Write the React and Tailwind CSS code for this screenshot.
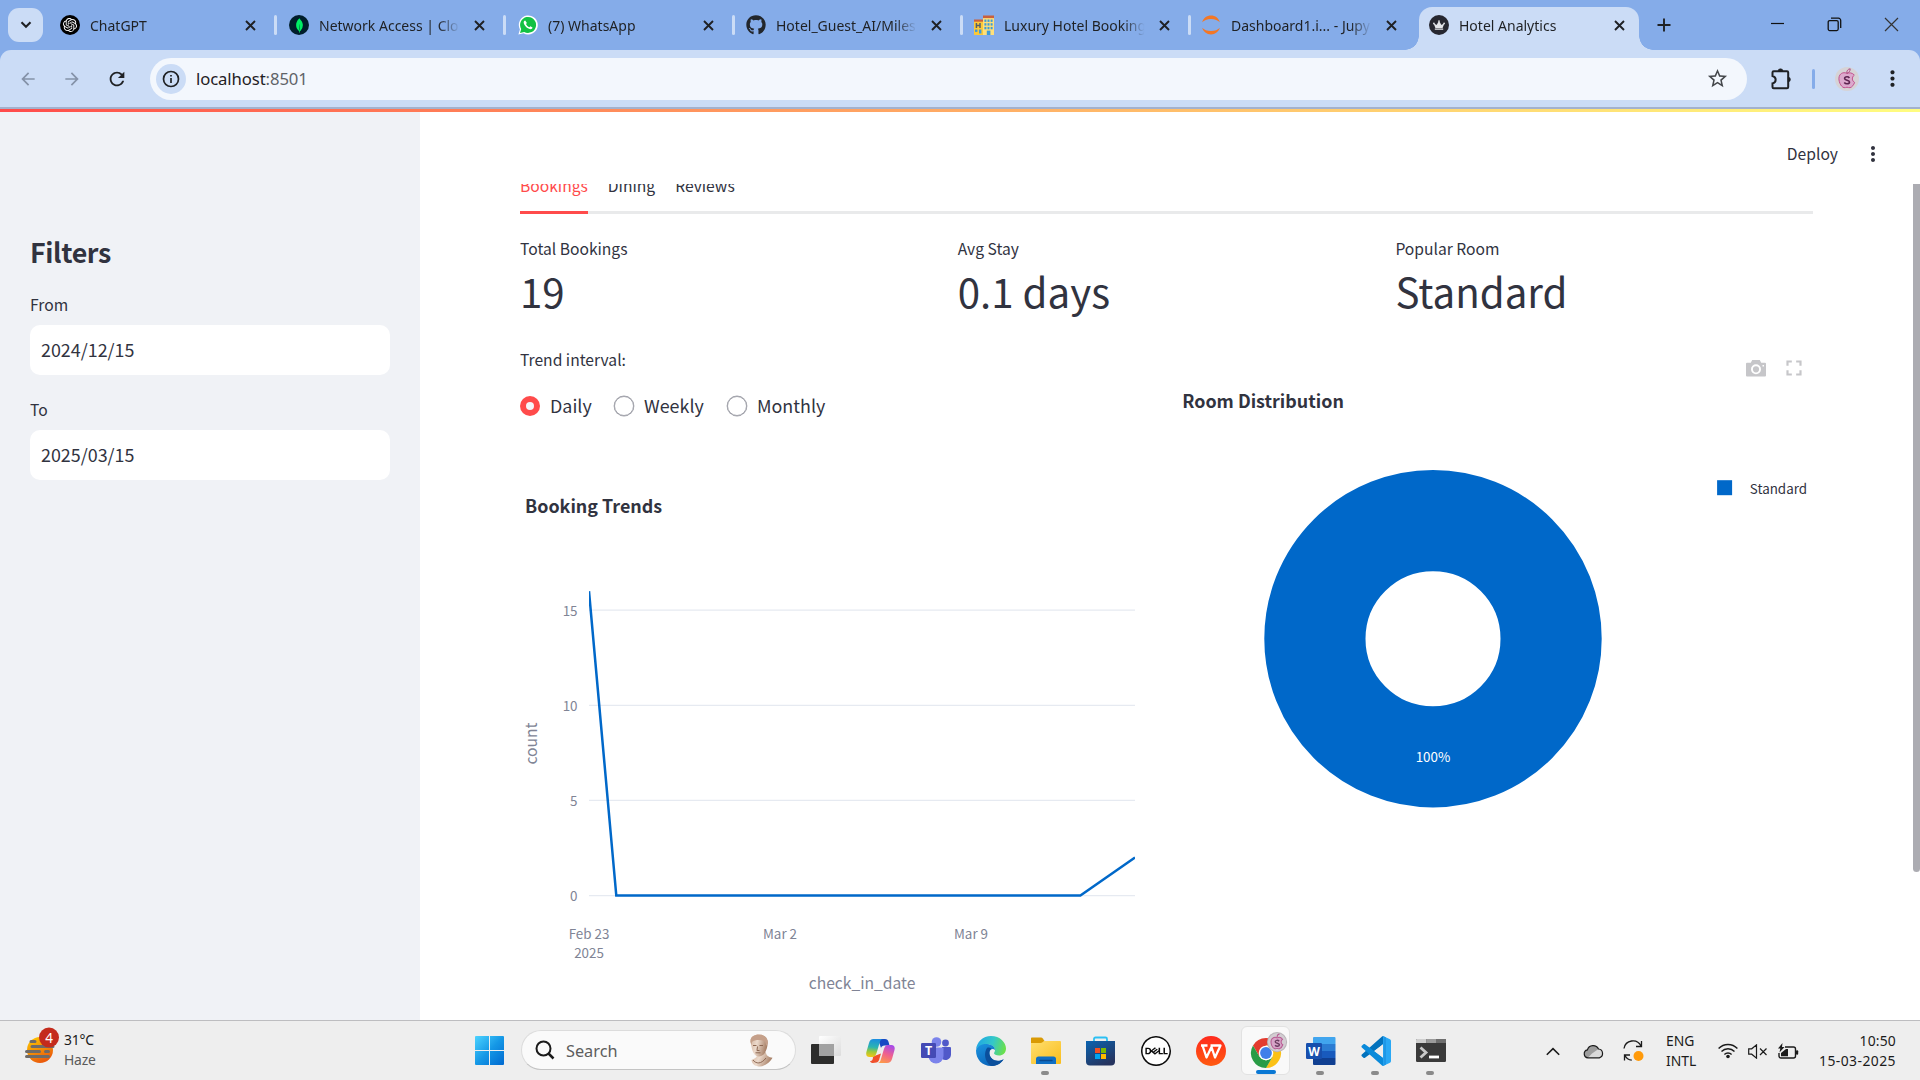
import React from "react";
import { FaGithub, FaCrown } from "react-icons/fa";
import { SiOpenai, SiMongodb, SiDell } from "react-icons/si";
import {
  MdArrowBack,
  MdArrowForward,
  MdRefresh,
  MdStarBorder,
  MdMoreVert,
  MdFullscreen,
} from "react-icons/md";

const UI = "font-['Noto_Sans','Open_Sans',sans-serif]";
const APP = "font-['Noto_Sans_CJK_SC',sans-serif]";
const APP_STACK = "'Noto Sans CJK SC', sans-serif";

/* ---------- favicons ---------- */

const HotelIcon = () => (
  <svg width="20" height="20" viewBox="0 0 20 20">
    <rect x="0" y="6" width="9" height="14" fill="#fdc936" />
    <rect x="0" y="4.5" width="9" height="2.2" fill="#c9603c" />
    <rect x="9" y="2" width="11" height="18" fill="#ffe07a" />
    <rect x="9" y="0.5" width="11" height="2.6" fill="#c9603c" />
    <path d="M2.4 8v5M6 8v5M2.4 10.5h3.6" stroke="#55606b" strokeWidth="1.5" />
    <rect x="1" y="14.5" width="2.4" height="2.4" fill="#3d9bd8" />
    <rect x="5" y="14.5" width="2.4" height="4" fill="#3d9bd8" />
    {[4.5, 8.2, 11.9].map((y) => (
      <g key={y} fill="#3d9bd8">
        <rect x="10.4" y={y} width="2" height="2.4" />
        <rect x="13.5" y={y} width="2" height="2.4" />
        <rect x="16.6" y={y} width="2" height="2.4" />
      </g>
    ))}
    <rect x="12.8" y="15.6" width="3.6" height="4.4" fill="#3d9bd8" />
  </svg>
);

const JupyterIcon = () => (
  <svg width="20" height="20" viewBox="0 0 20 20" fill="#f37726">
    <path d="M1.2 7.2C2.3 3.2 5.8 .6 10 .6s7.700 2.600 8.800 6.600C17 5.200 13.900 3.900 10 3.900S3 5.200 1.200 7.200z" />
    <path d="M1.2 12.800C2.300 16.800 5.800 19.400 10 19.400s7.700-2.600 8.800-6.600C17 14.800 13.900 16.100 10 16.100S3 14.800 1.200 12.800z" />
  </svg>
);

const favicons = {
  chatgpt: (
    <span className="flex size-5 items-center justify-center rounded-full bg-black text-white">
      <SiOpenai size={14} />
    </span>
  ),
  mongo: (
    <span className="flex size-5 items-center justify-center rounded-full bg-[#001e2b] text-[#00ed64]">
      <SiMongodb size={15} />
    </span>
  ),
  whatsapp: (
    <svg width="20" height="20" viewBox="0 0 20 20">
      <path d="M.4 19.600l1.500-5.200A9.500 9.500 0 1 1 5.600 18.200z" fill="#fff" />
      <path d="M2 18l1.200-4A8 8 0 1 1 6.200 16.900z" fill="#12c143" />
      <path
        d="M7.200 5.400c-.9.100-1.600 1-1.500 2.200.3 3 3.600 6.300 6.600 6.600 1.200.1 2.200-.7 2.200-1.700l-2.100-1.200-1 1c-1.500-.6-2.800-1.900-3.400-3.300l.9-.9z"
        fill="#fff"
      />
    </svg>
  ),
  github: <FaGithub size={20} color="#22262c" />,
  hotel: <HotelIcon />,
  jupyter: <JupyterIcon />,
  crown: (
    <span className="flex size-5 items-center justify-center rounded-full bg-[#262730] text-[#e4e6ea]">
      <FaCrown size={12} />
    </span>
  ),
};

const tabs = [
  { icon: "chatgpt", title: "ChatGPT", width: "w-[229px]" },
  { icon: "mongo", title: "Network Access | Clou", width: "w-[229px]" },
  { icon: "whatsapp", title: "(7) WhatsApp", width: "w-[228px]" },
  { icon: "github", title: "Hotel_Guest_AI/Miles", width: "w-[228px]" },
  { icon: "hotel", title: "Luxury Hotel Booking", width: "w-[227px]" },
  { icon: "jupyter", title: "Dashboard1.i... - Jupy", width: "w-[228px]" },
];

const CloseX = () => (
  <svg width="11" height="11" viewBox="0 0 11 11" stroke="#1f2124" strokeWidth="1.900">
    <path d="M1 1l9 9M10 1l-9 9" />
  </svg>
);

const TabBody = ({ icon, title }) => (
  <>
    <span className="ml-2.5 flex size-5 shrink-0 items-center">{favicons[icon]}</span>
    <span className="ml-2.5 w-[142px] shrink-0 overflow-hidden pt-px text-[14px] leading-5 whitespace-nowrap text-[#1f2124] [mask-image:linear-gradient(to_right,#000_84%,transparent_99%)]">
      {title}
    </span>
    <span className="ml-[13px] shrink-0">
      <CloseX />
    </span>
  </>
);

function TabStrip() {
  return (
    <div className="flex h-[50px] bg-[#85ace9]">
      <div className="mt-2 ml-2 flex h-[34px] w-[35px] items-center justify-center rounded-[11px] bg-[#cbdcf6]">
        <svg width="12" height="8" viewBox="0 0 12 8" fill="none" stroke="#1f2124" strokeWidth="2.100">
          <path d="M1.500 1.200L6 5.700l4.500-4.500" />
        </svg>
      </div>
      <div className="ml-[7px] flex">
        {tabs.map((t, i) => (
          <div key={t.title} className={"flex h-[50px] items-center " + t.width}>
            <TabBody {...t} />
            {i < 5 && <span className="ml-[18px] h-5 w-[3px] shrink-0 rounded-full bg-[#cbdcf6]" />}
          </div>
        ))}
        <div className="relative mt-[7px] flex h-[43px] w-[220px] items-center rounded-t-[13px] bg-[#cbdcf6] pb-[7px]">
          <TabBody icon="crown" title="Hotel Analytics" />
          <span className="absolute bottom-0 -left-[14px] size-[14px] bg-[radial-gradient(circle_at_0_0,transparent_13.5px,#cbdcf6_14px)]" />
          <span className="absolute -right-[14px] bottom-0 size-[14px] bg-[radial-gradient(circle_at_100%_0,transparent_13.5px,#cbdcf6_14px)]" />
        </div>
      </div>
      <div className="ml-[18px] flex h-[50px] items-center">
        <svg width="14" height="14" viewBox="0 0 14 14" stroke="#1f2124" strokeWidth="1.900">
          <path d="M7 .5v13M.5 7h13" />
        </svg>
      </div>
      <div className="mr-[21px] ml-auto flex h-[48px] items-center gap-[42px]">
        <svg width="15" height="15" viewBox="0 0 15 15" stroke="#111" strokeWidth="1.200">
          <path d="M1 6.500h13" />
        </svg>
        <svg width="15" height="15" viewBox="0 0 15 15" fill="none" stroke="#111" strokeWidth="1.300">
          <rect x="1.200" y="3.600" width="10" height="10" rx="1.500" />
          <path d="M4 1.200h7.500a2.200 2.200 0 0 1 2.200 2.200V11" />
        </svg>
        <svg width="15" height="15" viewBox="0 0 15 15" stroke="#333" strokeWidth="1.200">
          <path d="M1 1l13 13M14 1L1 14" />
        </svg>
      </div>
    </div>
  );
}

const Avatar = ({ size }) => (
  <svg width={size} height={size} viewBox="0 0 24 24">
    <circle cx="12" cy="12" r="12" fill="#d6d3d6" />
    <path
      d="M12 6.500c-2-1.400-6.600-1.200-7.800 3-1.200 4.300 1.600 10.300 4.800 11.200 1.200.3 2-.5 3-.5s1.900.8 3.100.5c2-.6 3.700-2.900 4.500-5.300-2.600-1.200-3.200-5.300-.3-7.300-1.900-2.500-5.300-2.700-7.300-1.600z"
      fill="#dca9cd"
      stroke="#c2528f"
      strokeWidth="1"
    />
    <path d="M11.800 6.200C11.500 4 12.800 2 15.200 1.800c.1 2.300-1.200 4-3.400 4.400z" fill="#e3bfd4" stroke="#a8467d" strokeWidth=".9" />
    <path
      d="M14.400 10.900c-.6-.8-1.400-1.100-2.400-1.100-1.300 0-2.400.5-2.400 1.700 0 2.400 4.900 1.100 4.900 3.500 0 1.200-1.200 1.800-2.500 1.800-1.200 0-2.100-.4-2.700-1.200"
      fill="none"
      stroke="#5d2450"
      strokeWidth="1.600"
    />
  </svg>
);

function Toolbar() {
  return (
    <div className="bg-[#85ace9]">
      <div className="flex h-[57px] items-center rounded-t-[11px] bg-[#cbdcf6]">
        <MdArrowBack size={20} className="ml-[18px] text-[#8592a8]" />
        <MdArrowForward size={20} className="ml-[24px] text-[#8592a8]" />
        <MdRefresh size={22} className="ml-[24px] text-[#1f2124]" />
        <div className="ml-[22px] flex h-[42px] w-[1597px] items-center rounded-full bg-[#f3f7fd]">
          <span className="ml-[6px] flex size-[30px] items-center justify-center rounded-full bg-[#cbdcf6]">
            <svg width="18" height="18" viewBox="0 0 18 18" fill="none" stroke="#1f2124" strokeWidth="1.700">
              <circle cx="9" cy="9" r="7.500" />
              <path d="M9 8v5M9 4.900v1.700" />
            </svg>
          </span>
          <span className="ml-[10px] pt-px text-[16.700px] leading-6 tracking-[-0.1px] text-[#1f2124]">
            localhost<span className="text-[#5f6368]">:8501</span>
          </span>
          <MdStarBorder size={23} className="mr-[18px] ml-auto text-[#44474b]" />
        </div>
        <svg className="ml-[23px]" width="22" height="24" viewBox="0 0 22 24" fill="none" stroke="#1f2124" strokeWidth="2">
          <path d="M2.500 5.500c0-.8.400-1.200 1.200-1.200H17c.8 0 1.200.4 1.200 1.200V20c0 .8-.4 1.200-1.200 1.200H3.700c-.8 0-1.200-.4-1.200-1.200v-3.600c4.200-1 4.200-6.400 0-7.400z" />
          <path d="M8 4.200a2.500 2.500 0 0 1 5 0zM18.200 10.200a2.300 2.300 0 0 1 0 4.600z" fill="#1f2124" strokeWidth=".5" />
        </svg>
        <span className="ml-[20px] h-5 w-[3px] rounded-full bg-[#85ace9]" />
        <span className="ml-[20px]">
          <Avatar size={24} />
        </span>
        <MdMoreVert size={25} className="ml-[21px] text-[#1f2124]" />
      </div>
    </div>
  );
}

/* ---------- page ---------- */

const DateField = ({ label, value, className }) => (
  <div className={className}>
    <div className="h-[25px] text-[15.650px] leading-[25px]">{label}</div>
    <div className="mt-[8px] h-[50px] w-[360px] rounded-[10px] bg-white pl-[11px] text-[17.900px] leading-[48px]">
      {value}
    </div>
  </div>
);

function Sidebar() {
  return (
    <div className="w-[420px] shrink-0 bg-[#f0f2f6] pl-[30px]">
      <div className="mt-[120px] text-[26.800px] leading-[40px] font-semibold tracking-[-0.35px]">Filters</div>
      <DateField className="mt-[20px]" label="From" value="2024/12/15" />
      <DateField className="mt-[22px]" label="To" value="2025/03/15" />
    </div>
  );
}

const metrics = [
  ["Total Bookings", "19"],
  ["Avg Stay", "0.1 days"],
  ["Popular Room", "Standard"],
];

const Radio = ({ label, checked, className }) => (
  <div className={"flex items-center " + className}>
    {checked ? (
      <span className="flex size-5 items-center justify-center rounded-full bg-[#ff4b4b]">
        <span className="size-[7.500px] rounded-full bg-[#f5f6f9]" />
      </span>
    ) : (
      <span className="size-5 rounded-full border-[1.500px] border-[#a3a4ac] bg-white shadow-[0_0_0_0.400px_#a3a4ac]" />
    )}
    <span className="ml-[10px] pb-[2px] text-[17.900px] leading-[22px]">{label}</span>
  </div>
);

const counts = [16, 0, 0, 0, 0, 0, 0, 0, 0, 0, 0, 0, 0, 0, 0, 0, 0, 0, 0];

function TrendChart() {
  const x = (d) => 589 + d * 27.3;
  const y = (v) => 895.5 - v * 19.02;
  const pts = counts.map((v, d) => `${x(d)},${y(v)}`);
  pts.push(`${x(20)},${y(2)}`);
  return (
    <svg className="block" width="636" height="602" viewBox="520 418 636 602" fontFamily={APP_STACK}>
      <text x="525" y="513" fontSize="17.900" fontWeight="700" fill="#31333f">
        Booking Trends
      </text>
      {[0, 5, 10, 15].map((v) => (
        <g key={v}>
          <line x1="589" x2="1135" y1={y(v)} y2={y(v)} stroke="#e6eaf1" strokeWidth="1.250" />
          <text x="577.500" y={y(v) + 5.5} fontSize="13.400" fill="#808495" textAnchor="end">
            {v}
          </text>
        </g>
      ))}
      <clipPath id="plotArea">
        <rect x="589" y="560" width="546" height="360" />
      </clipPath>
      <polyline points={pts.join(" ")} fill="none" stroke="#0068c9" strokeWidth="2.500" clipPath="url(#plotArea)" />
      <g fontSize="13.400" fill="#808495" textAnchor="middle">
        <text x="589" y="939">Feb 23</text>
        <text x="589" y="958">2025</text>
        <text x="780" y="939">Mar 2</text>
        <text x="971" y="939">Mar 9</text>
      </g>
      <g fontSize="15.650" fill="#808495" textAnchor="middle">
        <text x="862" y="989">check_in_date</text>
        <text transform="translate(537 743.5) rotate(-90)">count</text>
      </g>
    </svg>
  );
}

function RoomChart() {
  return (
    <svg className="block" width="636.500" height="631" viewBox="1177.200 389 636.500 631" fontFamily={APP_STACK}>
      <text x="1182.400" y="408" fontSize="17.900" fontWeight="700" fill="#31333f">
        Room Distribution
      </text>
      <circle cx="1433.200" cy="638.700" r="118.100" fill="none" stroke="#0068c9" strokeWidth="101.200" />
      <text x="1433.200" y="762" fontSize="13.400" fill="#fff" textAnchor="middle">
        100%
      </text>
      <rect x="1717.300" y="480.200" width="15" height="15" fill="#0068c9" />
      <text x="1750" y="494" fontSize="13.400" fill="#31333f">
        Standard
      </text>
    </svg>
  );
}

function Main() {
  return (
    <div className="flex w-[1500px] flex-col bg-white">
      <div className="flex h-[72px] shrink-0 items-center justify-end pt-[12px] pr-[35px]">
        <span className="text-[15.650px] leading-6">Deploy</span>
        <MdMoreVert size={24} className="ml-[23px] text-[#31333f]" />
      </div>
      <div className="flex h-[836px] overflow-hidden">
        <div className="ml-[100px] w-[1293px]">
          <div className="-mt-[10px] flex h-[40px] gap-[20px] border-b-[3px] border-[#e9eaeb] text-[15.650px] leading-6">
            <span className="h-[40px] border-b-[3px] border-[#ff4b4b] text-[#ff4b4b]">Bookings</span>
            <span>Dining</span>
            <span>Reviews</span>
          </div>
          <div className="flex h-[133px] pt-[22px]">
            {metrics.map(([label, value]) => (
              <div key={label} className="w-[437.700px] shrink-0">
                <div className="h-[25px] text-[15.650px] leading-[25px]">{label}</div>
                <div className="text-[40.250px] leading-[60px]">{value}</div>
              </div>
            ))}
          </div>
          <div className="flex gap-5">
            <div className="w-[636.500px]">
              <div className="h-[25px] text-[15.650px] leading-[25px]">Trend interval:</div>
              <div className="mt-[22px] flex h-6 items-center">
                <Radio label="Daily" checked className="w-[94px]" />
                <Radio label="Weekly" className="w-[113px]" />
                <Radio label="Monthly" className="w-[120px]" />
              </div>
              <TrendChart />
            </div>
            <div className="w-[636.500px]">
              <div className="flex h-[42px] items-center justify-end pr-[6px] text-[#c6c6c9]">
                <svg width="20" height="17" viewBox="0 0 20 17">
                  <path
                    fillRule="evenodd"
                    fill="currentColor"
                    d="M6.200 0h7.600l1.400 2.800H19a1 1 0 0 1 1 1V15.500a1 1 0 0 1-1 1H1a1 1 0 0 1-1-1V3.800a1 1 0 0 1 1-1h3.800zM10 4.300a5 5 0 1 0 0 10 5 5 0 0 0 0-10zM10 6.200a3.100 3.100 0 1 1 0 6.200 3.100 3.100 0 0 1 0-6.200zM16.500 5h1.500v1.400h-1.500z"
                  />
                </svg>
                <MdFullscreen size={26} className="ml-[15px]" />
              </div>
              <RoomChart />
            </div>
          </div>
        </div>
        <div className="ml-auto h-[688px] w-[7px] rounded-b-full bg-[#acacb2]" />
      </div>
    </div>
  );
}

/* ---------- taskbar ---------- */

const Weather = () => (
  <svg width="34" height="38" viewBox="0 0 34 38" fontFamily="'Noto Sans', sans-serif">
    <defs>
      <linearGradient id="sun" x1="0" y1="0" x2="0.500" y2="1">
        <stop offset="0" stopColor="#ffd000" />
        <stop offset="1" stopColor="#ea5b0c" />
      </linearGradient>
    </defs>
    <circle cx="15" cy="23" r="13" fill="url(#sun)" />
    <g stroke="#6f6b68" strokeWidth="3" strokeLinecap="round">
      <path d="M6 14.500h4M7 19.500h21M1.500 24.500h13M20.500 24.500h3M1.500 29.500h22" />
    </g>
    <circle cx="24" cy="10.500" r="10" fill="#c42b1c" />
    <text x="24" y="15.500" fontSize="13.500" fill="#fff" textAnchor="middle">
      4
    </text>
  </svg>
);

const WindowsLogo = () => (
  <svg width="29" height="29" viewBox="0 0 29 29">
    <defs>
      <linearGradient id="win" x1="0" y1="0" x2="1" y2="1">
        <stop offset="0" stopColor="#4cd3ff" />
        <stop offset="0.500" stopColor="#1598e6" />
        <stop offset="1" stopColor="#0069d0" />
      </linearGradient>
    </defs>
    <path
      fill="url(#win)"
      d="M1 0h13v14H0V1a1 1 0 0 1 1-1zM15 0h13a1 1 0 0 1 1 1v13H15zM0 15h14v14H1a1 1 0 0 1-1-1zM15 15h14v13a1 1 0 0 1-1 1H15z"
    />
  </svg>
);

const Bust = () => (
  <svg width="24" height="33" viewBox="0 0 24 33">
    <defs>
      <linearGradient id="marble" x1="0" y1="0" x2="1" y2="0.300">
        <stop offset="0" stopColor="#d3b39d" />
        <stop offset="0.450" stopColor="#ecdacc" />
        <stop offset="1" stopColor="#a98269" />
      </linearGradient>
    </defs>
    <path
      fill="url(#marble)"
      d="M2.500 26c3-1.200 5.500-2.500 5.500-5l9-3c-.3 3.500 3 5 6.500 5.800-2 4-6.500 8-12.500 8.700C6.500 32.500 3 30.500 2.500 26z"
    />
    <path fill="url(#marble)" d="M1.500 8C1 3 5 .5 10 .5S19 3.500 18.700 9c-.1 3.500-1.200 7.500-3.200 10.500-1.500 2-3.500 3-5.500 3-3.500 0-6-3-7-7.500z" />
    <path d="M1.500 8C1 3 5 .5 10 .5S19 3.500 18.700 9l-1.200 3-1.500-4.500C12 5.500 6 5.500 3 8l-.5 3z" fill="#c5a08a" />
    <path d="M4 11.500h3.500M10.500 11.500h3.500M8.500 12.500l-.5 4h2.500M6.500 18.800h5M4 26c3 4 8 4.500 13-2" fill="none" stroke="#8d6853" strokeWidth="1" />
  </svg>
);

const TaskView = () => (
  <svg width="30" height="29" viewBox="0 0 30 29">
    <defs>
      <linearGradient id="tvw" x1="0" y1="0" x2="1" y2="1">
        <stop offset="0" stopColor="#fff" />
        <stop offset="1" stopColor="#dcdcdc" />
      </linearGradient>
    </defs>
    <rect x="8" y="0" width="22" height="20" rx="1" fill="url(#tvw)" />
    <rect x="0" y="8" width="23" height="20" rx="1" fill="#2d2d2c" />
    <rect x="8" y="8" width="15" height="12" fill="#a2a2a2" />
  </svg>
);

const Copilot = () => (
  <svg width="29" height="26" viewBox="0 0 29 26">
    <defs>
      <linearGradient id="cpa" x1="0.400" y1="0" x2="0.300" y2="1">
        <stop offset="0" stopColor="#1b8ee0" />
        <stop offset="0.450" stopColor="#2cb5b0" />
        <stop offset="0.700" stopColor="#9ac93c" />
        <stop offset="1" stopColor="#f6c514" />
      </linearGradient>
      <linearGradient id="cpb" x1="0.700" y1="0" x2="0.300" y2="1">
        <stop offset="0" stopColor="#a84be8" />
        <stop offset="0.500" stopColor="#f0618e" />
        <stop offset="1" stopColor="#fd9a4a" />
      </linearGradient>
    </defs>
    <path d="M12 1h7c2 0 3 1 3.600 3l.9 3.500h-5c-2 0-3 1-3.500 2.500z" fill="#1749c4" />
    <path d="M7 25l3.500-.5c2-.5 2.500-2 3-4l1.500-5-8 3c0 4-1.500 5-3 4.500.5 1.500 1.500 2 3 2z" fill="#f0502c" />
    <path d="M7.500 1H17c-2 0-2.700 1.500-3.300 3.500l-3 10c-.8 2.700-1.700 4.500-4.500 4.500H3.500C.8 19-.3 17 .4 14L3 5c.8-2.800 2-4 4.500-4z" fill="url(#cpa)" />
    <path d="M21 25h-9.500c2 0 2.700-1.500 3.300-3.500l3-10C18.600 8.800 19.500 7 22.300 7H25.500c2.700 0 3.700 2 3 5L26 21c-.8 2.800-2.300 4-5 4z" fill="url(#cpb)" />
  </svg>
);

const Teams = () => (
  <svg width="30" height="27" viewBox="0 0 30 27" fontFamily="'Open Sans', sans-serif">
    <circle cx="24.500" cy="6" r="3.400" fill="#5059c9" />
    <path d="M21 10h8a1 1 0 0 1 1 1v6.500a5.500 5.500 0 0 1-9 4.200z" fill="#5059c9" />
    <circle cx="15.500" cy="5" r="4.800" fill="#7b83eb" />
    <path d="M8 10.500h13.500a1 1 0 0 1 1 1V19a7.500 7.500 0 0 1-15 0z" fill="#7b83eb" />
    <rect x="0" y="6" width="15" height="15" rx="1.200" fill="#444ab5" />
    <text x="7.500" y="18" fontSize="12.500" fontWeight="700" fill="#fff" textAnchor="middle">
      T
    </text>
  </svg>
);

const Edge = () => (
  <svg width="30" height="30" viewBox="0 0 30 30">
    <defs>
      <linearGradient id="eda" x1="0" y1="0.300" x2="1" y2="0.500">
        <stop offset="0" stopColor="#1fa5e6" />
        <stop offset="0.550" stopColor="#34c8c8" />
        <stop offset="1" stopColor="#6be04a" />
      </linearGradient>
      <linearGradient id="edb" x1="0" y1="0" x2="0.600" y2="1">
        <stop offset="0" stopColor="#1b94e0" />
        <stop offset="1" stopColor="#0a62b8" />
      </linearGradient>
    </defs>
    <path d="M15 0c9 0 15 6.500 15 12.500 0 4.500-3.200 7-7 7-3 0-5-1-5-2.200 0-.8 1-1.300 1-3.300 0-3-3-5.500-7-5.500-5 0-11 2-12 5.500C.5 6 7 0 15 0z" fill="url(#eda)" />
    <path d="M0 14.500C1 10 6 7.500 11 8c5 .3 8 3 8 6-2-2-5-1-5.500 2-.8 5 4 9.500 9 9 2.500-.3 4-1.200 5.200-1.700C24.500 28 20 30 15 30 6.500 30 0 23.500 0 14.500z" fill="url(#edb)" />
    <path d="M11 12c-4 6-1.500 15 4.500 18 5 .3 9.500-2.500 12.200-6.700-1.500.8-3.300 1.500-5.700 1.500-5.500 0-9.300-4.300-8.500-9 .3-1.500 1-2.500 2-3-1.500-1.300-3.300-1.600-4.500-.8z" fill="#0b4f9c" />
  </svg>
);

const Folder = () => (
  <svg width="30" height="28" viewBox="0 0 30 28">
    <defs>
      <linearGradient id="fold" x1="0" y1="0" x2="1" y2="1">
        <stop offset="0" stopColor="#ffdf70" />
        <stop offset="1" stopColor="#f9bd1c" />
      </linearGradient>
    </defs>
    <path d="M0 1.500C0 .7.500.500 1 .500h9c.8 0 1.200.3 1.800 1L13.500 4 12 7H0z" fill="#d99a05" />
    <path d="M0 6h9.500c.8 0 1.500-.3 2-.8L13 4h16a1 1 0 0 1 1 1v21a1 1 0 0 1-1 1H1a1 1 0 0 1-1-1z" fill="url(#fold)" />
    <path d="M5 27v-5a2.500 2.500 0 0 1 2.500-2.500h15A2.500 2.500 0 0 1 25 22v5z" fill="#0f6fc4" />
    <path d="M9 23.500h12" stroke="#0a4a8f" strokeWidth="1.300" strokeLinecap="round" />
  </svg>
);

const Store = () => (
  <svg width="29" height="30" viewBox="0 0 29 30">
    <defs>
      <linearGradient id="store" x1="0" y1="0" x2="0.600" y2="1">
        <stop offset="0" stopColor="#0a63b0" />
        <stop offset="1" stopColor="#26345f" />
      </linearGradient>
    </defs>
    <path d="M8 6V3c0-1 .6-1.500 1.500-1.500h10c.9 0 1.500.5 1.500 1.500v3" fill="none" stroke="#2cc0f3" strokeWidth="1.800" />
    <path d="M0 5h29v20.500a4 4 0 0 1-4 4H4a4 4 0 0 1-4-4z" fill="url(#store)" />
    <rect x="9" y="12" width="5" height="5" fill="#f25022" />
    <rect x="15" y="12" width="5" height="5" fill="#7fba00" />
    <rect x="9" y="18" width="5" height="5" fill="#00a4ef" />
    <rect x="15" y="18" width="5" height="5" fill="#ffb900" />
  </svg>
);

const Wps = () => (
  <svg width="30" height="30" viewBox="0 0 30 30">
    <defs>
      <linearGradient id="wps" x1="0" y1="0" x2="0" y2="1">
        <stop offset="0" stopColor="#ff2a1d" />
        <stop offset="1" stopColor="#ff5a10" />
      </linearGradient>
    </defs>
    <circle cx="15" cy="15" r="15" fill="url(#wps)" />
    <path d="M5 9.500h6.500M6.500 9.500l4 12 5-10.500 3.500 10.500 5.500-12h-10" fill="none" stroke="#fff" strokeWidth="2.300" strokeLinejoin="round" />
  </svg>
);

const Chrome = () => (
  <svg width="40" height="40" viewBox="0 0 40 40" className="shrink-0 overflow-visible">
    <path d="M7 14.500A15 15 0 0 1 33 14.500H20l-6.500 11.300z" fill="#e33b2e" />
    <path d="M33 14.500A15 15 0 0 1 19.800 37L26.500 25.800 20 14.500z" fill="#fbc116" />
    <path d="M7 14.500l6.500 11.300L20 29.500l6.500-3.700L20 37A15 15 0 0 1 7 14.500z" fill="#2a9c46" />
    <circle cx="20" cy="22" r="7.300" fill="#fff" />
    <circle cx="20" cy="22" r="5.900" fill="#3f7fea" />
    <g transform="translate(21 1) scale(.84)">
      <circle cx="12" cy="12" r="12" fill="#b9b5b9" />
      <circle cx="12" cy="12" r="10.800" fill="#d3cdd2" />
      <path
        d="M12 7c-2-1.400-6-1-7 3-1 4 1.500 9.300 4.300 10 1.100.3 1.800-.5 2.700-.5s1.700.8 2.800.5c1.800-.6 3.300-2.600 4-4.800-2.400-1.100-2.900-4.800-.3-6.600C16.900 6.500 13.900 6 12 7zM12 6c0-2 1-3.500 3-3.700"
        fill="#d7a5c8"
        stroke="#b75a92"
        strokeWidth="1.200"
      />
      <path d="M14.500 11c-1.300-1.600-4.700-1.400-4.700.6 0 2.300 5 1.200 5 3.600 0 2-3.700 2.300-5.200.5" fill="none" stroke="#6c3f62" strokeWidth="1.700" />
    </g>
  </svg>
);

const Word = () => (
  <svg width="30" height="28" viewBox="0 0 30 28" fontFamily="'Open Sans', sans-serif">
    <path d="M8 0h20.500a1 1 0 0 1 1 1v6H7V1a1 1 0 0 1 1-1z" fill="#41a5ee" />
    <path d="M7 7h22.500v7H7z" fill="#2b7cd3" />
    <path d="M7 14h22.500v7H7z" fill="#185abd" />
    <path d="M7 21h22.500v6a1 1 0 0 1-1 1H8a1 1 0 0 1-1-1z" fill="#103f91" />
    <rect x="0" y="6" width="16" height="16" rx="1.200" fill="#174fad" />
    <text x="8" y="18.500" fontSize="12" fontWeight="700" fill="#fff" textAnchor="middle">
      W
    </text>
  </svg>
);

const VsCode = () => (
  <svg width="30" height="30" viewBox="0 0 30 30">
    <path d="M22 0l7 3.300c.6.300 1 .9 1 1.600v20.200c0 .7-.4 1.300-1 1.600L22 30z" fill="#29a8f5" />
    <path d="M21 .6L.8 18.500c-.5.500-.5 1.200 0 1.700l1.700 1.500c.4.400 1 .4 1.500.1L22 8.500V0z" fill="#0272bd" />
    <path d="M21 29.400L.8 11.500c-.5-.5-.5-1.200 0-1.700l1.700-1.500c.4-.4 1-.4 1.500-.1L22 21.500V30z" fill="#0a8ada" />
    <path d="M22 8.300v13.400L13.500 15z" fill="#eeeeee" />
    <path d="M22 0l-1 .6c.6-.3 1.600 0 1.600.9v27c0 .9-1 1.200-1.600.9l1 .6 3-1.500V1.500z" fill="#1e97e6" />
  </svg>
);

const Terminal = () => (
  <svg width="30" height="23" viewBox="0 0 30 23">
    <rect x="0" y="0" width="30" height="23" rx="1.200" fill="#3a3a3a" />
    <path d="M1 0h9.500v4H0V1a1 1 0 0 1 1-1z" fill="#cfcfcf" />
    <path d="M10.500 0h9.500v4h-9.500z" fill="#9b9b9b" />
    <path d="M20 0h9a1 1 0 0 1 1 1v3H20z" fill="#6e6e6e" />
    <path d="M4.500 8.500l5.500 5-5.500 5" fill="none" stroke="#c9c9c9" strokeWidth="2.800" />
    <path d="M13 18h10" stroke="#fff" strokeWidth="2.800" />
  </svg>
);

const Dell = () => (
  <span className="flex size-[30px] items-center justify-center rounded-full bg-white">
    <SiDell size={30} color="#0b0b0b" />
  </span>
);

const apps = [
  { id: "taskview", el: <TaskView /> },
  { id: "copilot", el: <Copilot /> },
  { id: "teams", el: <Teams /> },
  { id: "edge", el: <Edge /> },
  { id: "folder", el: <Folder />, run: true },
  { id: "store", el: <Store /> },
  { id: "dell", el: <Dell /> },
  { id: "wps", el: <Wps /> },
  { id: "chrome", el: <Chrome />, active: true },
  { id: "word", el: <Word />, run: true },
  { id: "vscode", el: <VsCode />, run: true },
  { id: "terminal", el: <Terminal />, run: true },
];

function Tray() {
  return (
    <div className="mr-[24px] ml-auto flex h-[60px] items-center text-[13.900px] leading-5 text-[#1b1b1b]">
      <svg width="14" height="9" viewBox="0 0 14 9" fill="none" stroke="#1b1b1b" strokeWidth="1.600">
        <path d="M.800 7.800L7 1.600l6.200 6.200" />
      </svg>
      <svg className="ml-[23px]" width="21" height="15" viewBox="0 0 21 15">
        <path d="M5 13.800a4 4 0 0 1-.6-7.900A6 6 0 0 1 15.500 5a4.500 4.500 0 0 1 .8 8.800z" fill="#d9d9d9" />
        <path d="M4.500 6A6 6 0 0 1 15.500 5L9 9.500 5 13.800A4 4 0 0 1 4.500 6z" fill="#9d9d9d" />
        <path d="M5 13.800a4 4 0 0 1-.6-7.900A6 6 0 0 1 15.500 5a4.500 4.500 0 0 1 .8 8.800z" fill="none" stroke="#1b1b1b" strokeWidth="1.200" />
      </svg>
      <svg className="ml-[19px]" width="21" height="22" viewBox="0 0 21 22" fill="none" stroke="#1b1b1b" strokeWidth="1.300">
        <path d="M1 8.500A9 9 0 0 1 18 6M18.500 1v5.500H13M1.500 20.500V15H7M1.800 15.200a9 9 0 0 0 7 5" />
        <circle cx="15.500" cy="16" r="5" fill="#ff9a0a" stroke="none" />
      </svg>
      <div className="ml-[22px] w-[32px]">
        <div>ENG</div>
        <div>INTL</div>
      </div>
      <svg className="ml-[20px]" width="20" height="16" viewBox="0 0 20 16" fill="none" stroke="#1b1b1b" strokeWidth="1.400">
        <path d="M.600 5.500a13 13 0 0 1 18.800 0M3.500 8.600a9 9 0 0 1 13 0M6.400 11.500a5 5 0 0 1 7.200 0" />
        <circle cx="10" cy="13.500" r="1.800" fill="#1b1b1b" stroke="none" />
      </svg>
      <svg className="ml-[10px]" width="19" height="15" viewBox="0 0 19 15" fill="none" stroke="#1b1b1b" strokeWidth="1.200">
        <path d="M.700 4.800h3L8.500.900v13.200L3.700 10.200h-3zM12 4.500l6.500 6.500M18.500 4.500L12 11" />
      </svg>
      <svg className="ml-[11px]" width="21" height="17" viewBox="0 0 21 17">
        <path d="M7 4h8.500a2 2 0 0 1 2 2v7a2 2 0 0 1-2 2H3a2 2 0 0 1-2-2v-3" fill="none" stroke="#1b1b1b" strokeWidth="1.400" />
        <rect x="18" y="7.200" width="2.200" height="4.500" rx="1" fill="#1b1b1b" />
        <path d="M3 13.200V10l5-4h2v7.200z" fill="#1b1b1b" />
        <path d="M4.500 0L0 5.500h2.300L1.500 9.500 6.500 4H4z" fill="#1b1b1b" />
      </svg>
      <div className="ml-[17px] w-[80px] text-right whitespace-nowrap">
        <div className="tracking-[0.200px]">10:50</div>
        <div className="tracking-[0.450px]">15-03-2025</div>
      </div>
    </div>
  );
}

function Taskbar() {
  return (
    <div className="flex h-[60px] border-t border-[#bdbdc0] bg-[#eeeeee]">
      <div className="mt-[6px] ml-[25px]">
        <Weather />
      </div>
      <div className="mt-[9px] ml-[5px] w-[61px] text-[13.900px] leading-5 tracking-[-0.200px]">
        <div className="text-[#1b1b1b]">31°C</div>
        <div className="text-[#5a5a5a]">Haze</div>
      </div>
      <div className="mt-[15px] ml-[350px] w-[46px]">
        <WindowsLogo />
      </div>
      <div className="mt-[9px] flex h-[40px] w-[275px] items-center rounded-full border border-[#dcdcdc] border-b-[#c4c4c4] bg-[#fafafa]">
        <svg className="ml-[13px]" width="20" height="20" viewBox="0 0 20 20" fill="none" stroke="#1b1b1b" strokeWidth="2">
          <circle cx="8.500" cy="8.500" r="7" />
          <path d="M13.500 13.500L18.500 18.500" strokeWidth="2.500" />
        </svg>
        <span className="ml-[11px] pt-[2px] text-[16.300px] leading-6 text-[#5d5d5d]">Search</span>
        <span className="mr-[22px] ml-auto">
          <Bust />
        </span>
      </div>
      <div className="ml-[2px] flex">
        {apps.map(({ id, el, run, active }) => (
          <div key={id} className="flex h-[59px] w-[55px] justify-center pt-[5px]">
            <div
              className={
                active
                  ? "relative flex size-[49px] items-center justify-center rounded-md border border-[#e2e2e2] bg-[#f9f9f9]"
                  : "relative flex size-[49px] items-center justify-center"
              }
            >
              {el}
              {run && <span className="absolute bottom-0 left-5 h-1 w-2 rounded-full bg-[#8a8a8a]" />}
              {active && <span className="absolute bottom-0 left-[14px] h-1 w-5 rounded-full bg-[#0a78d4]" />}
            </div>
          </div>
        ))}
      </div>
      <Tray />
    </div>
  );
}

export default function App() {
  return (
    <div className={"flex h-[1080px] w-[1920px] flex-col overflow-hidden bg-white " + UI}>
      <TabStrip />
      <Toolbar />
      <div className="h-[2px] bg-[#a3b1cd]" />
      <div className="h-[3px] bg-gradient-to-r from-[#ff4b4b] to-[#fffd80]" />
      <div className={"flex h-[908px] text-[#31333f] " + APP}>
        <Sidebar />
        <Main />
      </div>
      <Taskbar />
    </div>
  );
}
